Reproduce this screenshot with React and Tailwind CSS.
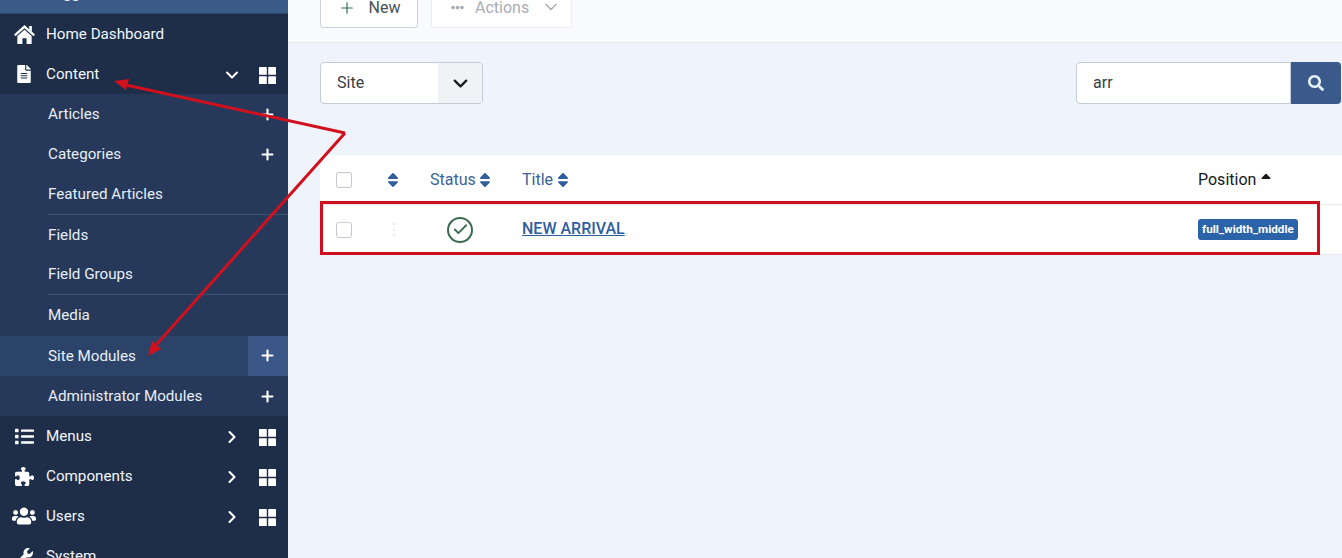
import { FaFileAlt, FaList, FaUsers, FaWrench, FaSearch, FaSort, FaSortUp, FaEllipsisH, FaBars } from 'react-icons/fa';
import { FaPuzzlePiece } from 'react-icons/fa6';
import { ChevronDown, ChevronRight, Plus, Check } from 'lucide-react';

const subItems = [
  { label: 'Articles', plus: true },
  { label: 'Categories', plus: true },
  { label: 'Featured Articles', line: true },
  { label: 'Fields' },
  { label: 'Field Groups', line: true },
  { label: 'Media' },
  { label: 'Site Modules', plus: true, active: true },
  { label: 'Administrator Modules', plus: true },
];

function HomeIcon({ size }) {
  return (
    <svg width={size} height={size} viewBox="0 0 20 18" fill="currentColor">
      <path d="M10 0 L20 9 L18.6 10.6 L10 3 L1.4 10.6 L0 9 Z" />
      <path d="M14.5 1 H17 V6.4 L14.5 4.2 Z" />
      <path d="M3.2 10.4 L10 4.5 L16.8 10.4 V18 H12 V12.5 H8 V18 H3.2 Z" />
    </svg>
  );
}

function GridIcon() {
  return (
    <svg width="17" height="17" viewBox="0 0 17 17" fill="currentColor" className="mr-[12px] mt-[2px] text-white">
      <rect x="0" y="0" width="7.8" height="7.8" rx="0.6" />
      <rect x="9.2" y="0" width="7.8" height="7.8" rx="0.6" />
      <rect x="0" y="9.2" width="7.8" height="7.8" rx="0.6" />
      <rect x="9.2" y="9.2" width="7.8" height="7.8" rx="0.6" />
    </svg>
  );
}

function MenuRow({ icon: Icon, label, chevron, iconSize = 18 }) {
  return (
    <div className="h-10 shrink-0 flex items-center text-[15.2px] text-[#f2f6fc]">
      <div className="w-[46px] flex justify-center pl-[2px] text-white">
        <Icon size={iconSize} />
      </div>
      <span className="flex-1">{label}</span>
      {chevron === 'down' && <ChevronDown size={20} strokeWidth={2.5} className="mr-[17px] mt-[2px] text-white" />}
      {chevron === 'right' && <ChevronRight size={20} strokeWidth={2.5} className="mr-[17px] mt-[2px] text-white" />}
      {chevron && <GridIcon />}
    </div>
  );
}

function SubRow({ item }) {
  return (
    <div className={`h-[40.3px] shrink-0 flex items-stretch text-[15.2px] text-[#e8eef8] pl-12 ${item.active ? 'bg-[#2c4369]' : ''}`}>
      <div className={`flex-1 flex items-center ${item.line ? 'border-b border-[#3a5375]' : ''}`}>
        <span className="flex-1">{item.label}</span>
        {item.plus && !item.active && (
          <div className="w-10 flex justify-center pr-[1px]">
            <Plus size={17} strokeWidth={3} className="text-white" />
          </div>
        )}
        {item.active && (
          <div className="w-10 h-full flex items-center justify-center pr-[1px] bg-[#3a5788]">
            <Plus size={17} strokeWidth={3} className="text-white" />
          </div>
        )}
      </div>
    </div>
  );
}

function Sidebar() {
  return (
    <aside className="w-[288px] shrink-0 h-full overflow-hidden flex flex-col bg-[#1e2e49]">
      <div className="h-[14px] shrink-0 overflow-hidden bg-[#3b5a88] border-b border-[#2a4569]">
        <div className="-mt-[27px] h-10 flex items-center text-[15.2px] text-[#e8eef8]">
          <div className="w-[46px] flex justify-center pl-[2px]">
            <FaBars size={18} />
          </div>
          <span>Toggle Menu</span>
        </div>
      </div>
      <MenuRow icon={HomeIcon} label="Home Dashboard" iconSize={21} />
      <MenuRow icon={FaFileAlt} label="Content" chevron="down" iconSize={18} />
      <div className="bg-[#26395a] flex flex-col">
        {subItems.map((item) => (
          <SubRow key={item.label} item={item} />
        ))}
      </div>
      <MenuRow icon={FaList} label="Menus" chevron="right" iconSize={19} />
      <MenuRow icon={FaPuzzlePiece} label="Components" chevron="right" iconSize={19} />
      <MenuRow icon={FaUsers} label="Users" chevron="right" iconSize={24} />
      <MenuRow icon={FaWrench} label="System" iconSize={17} />
    </aside>
  );
}

function Toolbar() {
  return (
    <div className="h-[43px] shrink-0 bg-[#f8fafd] border-b border-[#e6ebf3] pl-8 flex items-start gap-[13px] overflow-hidden">
      <div className="w-[98px] h-[28px] flex items-end pb-[10px] justify-center gap-[13px] bg-white border border-[#ccd2dc] rounded-b-[4px] border-t-0 text-[16px] text-[#4a5058]">
        <Plus size={18} strokeWidth={1.6} className="text-[#2f6b5c]" />
        <span className="leading-[18px]">New</span>
      </div>
      <div className="w-[141px] h-[28px] flex items-end pb-[10px] pl-[19px] bg-white border border-[#eceff4] rounded-b-[4px] border-t-0 text-[16px] text-[#a9aeb6]">
        <FaEllipsisH size={13} className="mb-[3px] mr-[11px]" />
        <span className="leading-[18px] flex-1">Actions</span>
        <ChevronDown size={20} strokeWidth={1.8} className="mr-[10px]" />
      </div>
    </div>
  );
}

function Filters() {
  return (
    <div className="h-[112px] shrink-0 pt-[19px] pl-8 flex items-start justify-between">
      <div className="w-[163px] h-[42px] flex bg-white border border-[#c4ccd8] rounded-[4px] overflow-hidden text-[16px] text-[#3a3f46]">
        <span className="flex-1 flex items-center pl-4">Site</span>
        <div className="w-[44px] bg-[#f0f2f5] flex items-center justify-center">
          <ChevronDown size={23} strokeWidth={2.4} className="text-[#1a1d22]" />
        </div>
      </div>
      <div className="w-[265px] h-[42px] mr-[1px] flex">
        <div className="flex-1 flex items-center pl-4 bg-white border border-[#c4ccd8] rounded-l-[4px] text-[16px] text-[#3a3f46]">arr</div>
        <div className="w-[50px] bg-[#3a5a8c] rounded-r-[4px] flex items-center justify-center">
          <FaSearch size={16} className="text-[#e8f2fb]" />
        </div>
      </div>
    </div>
  );
}

function Checkbox() {
  return <div className="w-[16px] h-[16px] bg-white border border-[#c3c8cf] rounded-[3px]" />;
}

function Table() {
  return (
    <div className="ml-8 bg-white text-[16px]">
      <div className="h-[50px] flex items-center border-b border-[#e6e9ee]">
        <div className="w-[50px] pl-4 shrink-0"><Checkbox /></div>
        <div className="w-[60px] pl-[14px] shrink-0 text-[#2f5e9e]"><FaSort size={18} /></div>
        <div className="w-[92px] shrink-0 flex items-center text-[#3d6299]">Status<FaSort size={18} className="text-[#2f5e9e]" /></div>
        <div className="w-[676px] shrink-0 flex items-center text-[#3d6299]">Title<FaSort size={18} className="text-[#2f5e9e] ml-[1px]" /></div>
        <div className="flex items-center gap-[2px] text-[#16191d]">Position<FaSortUp size={16} /></div>
      </div>
      <div className="h-[50px] flex items-center border-b border-[#e6e9ee]">
        <div className="w-[50px] pl-4 shrink-0"><Checkbox /></div>
        <div className="w-[60px] pl-[16px] shrink-0 text-[#e6e8ec] text-[16px] leading-none">⋮</div>
        <div className="w-[92px] shrink-0 pl-[17px]">
          <div className="w-[26px] h-[26px] rounded-full border-2 border-[#3a6b50] flex items-center justify-center">
            <Check size={17} strokeWidth={2.6} className="text-[#3a6b50]" />
          </div>
        </div>
        <div className="w-[676px] shrink-0 font-medium text-[#2f5e9e] underline -mt-[2px]">NEW ARRIVAL</div>
        <div className="h-[21px] px-[4px] flex items-center rounded-[3px] bg-[#2a63a8] text-white text-[11.7px] font-bold">full_width_middle</div>
      </div>
    </div>
  );
}

function Annotations() {
  return (
    <>
      <div className="absolute left-[320px] top-[201px] w-[1000px] h-[54px] border-[3px] border-[#cf0f1e] pointer-events-none" />
      <svg className="absolute left-0 top-0 pointer-events-none" width="400" height="400" fill="none">
        <path d="M345 133 L126 85 M345 133 L156 345" stroke="#d0101c" strokeWidth="3" />
        <path d="M114 81 L129 79 L126 90 Z" fill="#d0101c" />
        <path d="M148 356 L152 341 L161 349 Z" fill="#d0101c" />
      </svg>
    </>
  );
}

export default function App() {
  return (
    <div className="relative w-[1342px] h-[558px] overflow-hidden flex bg-[#eff4fc] font-['Roboto',sans-serif]">
      <Sidebar />
      <main className="flex-1 flex flex-col">
        <Toolbar />
        <Filters />
        <Table />
      </main>
      <Annotations />
    </div>
  );
}
